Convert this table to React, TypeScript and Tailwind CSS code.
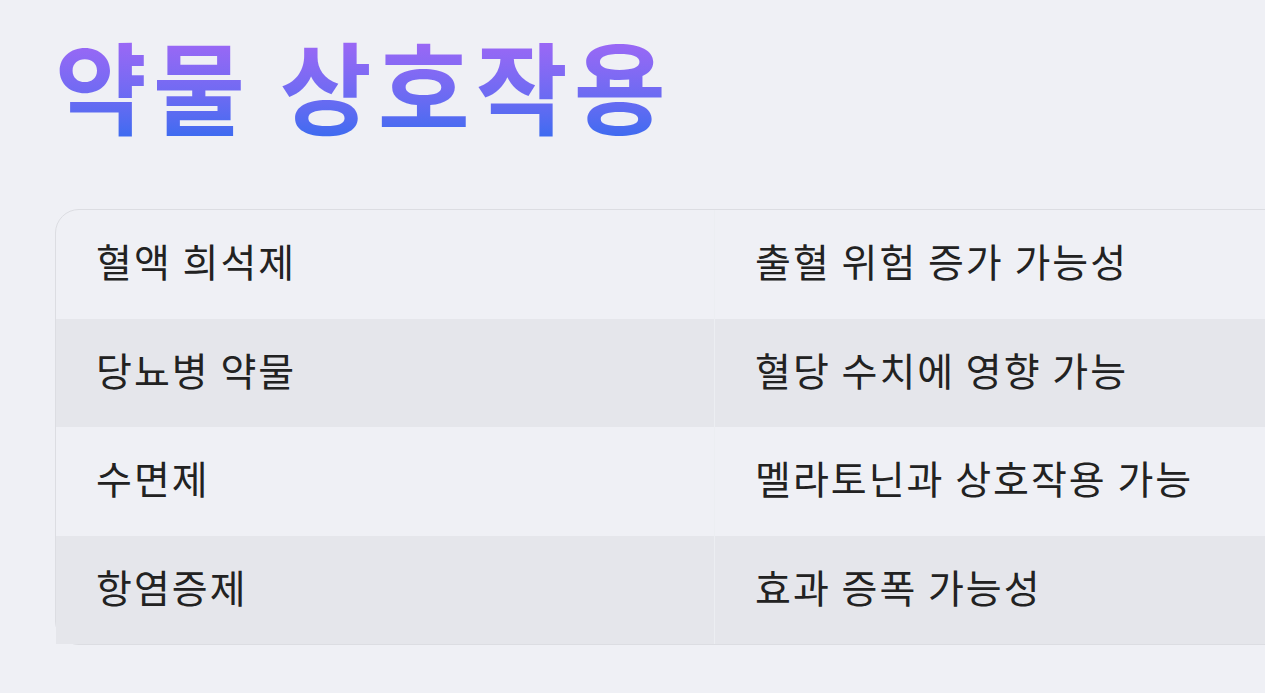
const rows = [
  { drug: '혈액 희석제', effect: '출혈 위험 증가 가능성' },
  { drug: '당뇨병 약물', effect: '혈당 수치에 영향 가능' },
  { drug: '수면제', effect: '멜라토닌과 상호작용 가능' },
  { drug: '항염증제', effect: '효과 증폭 가능성' },
];

export default function App() {
  return (
    <div
      className="h-[693px] w-full overflow-hidden bg-[#eff0f5] text-[#222]"
      style={{ fontFamily: '"Noto Sans CJK KR", "Noto Sans", sans-serif' }}
    >
      <div className="pl-[55px] pt-[29px]">
        <h1 className="bg-gradient-to-b from-[#a566f6] to-[#3a6bf0] bg-clip-text text-[100px] font-bold leading-[110px] tracking-[6px] text-transparent">
          약물 상호작용
        </h1>

        <table className="mt-[70px] w-[1320px] table-fixed border-separate border-spacing-0 rounded-[24px] border border-[#dcdde2]">
          <colgroup>
            <col className="w-[659px]" />
            <col />
          </colgroup>
          <tbody>
            {rows.map((row, i) => (
              <tr key={row.drug} className={i % 2 === 1 ? 'bg-[#e5e6eb]' : ''}>
                <td className="h-[108.5px] border-r border-[#eceef2] pb-[8px] pl-[40px] text-[39px] leading-[44px] tracking-[2px]">
                  {row.drug}
                </td>
                <td className="h-[108.5px] pb-[8px] pl-[40px] text-[39px] leading-[44px] tracking-[2px]">
                  {row.effect}
                </td>
              </tr>
            ))}
          </tbody>
        </table>
      </div>
    </div>
  );
}
